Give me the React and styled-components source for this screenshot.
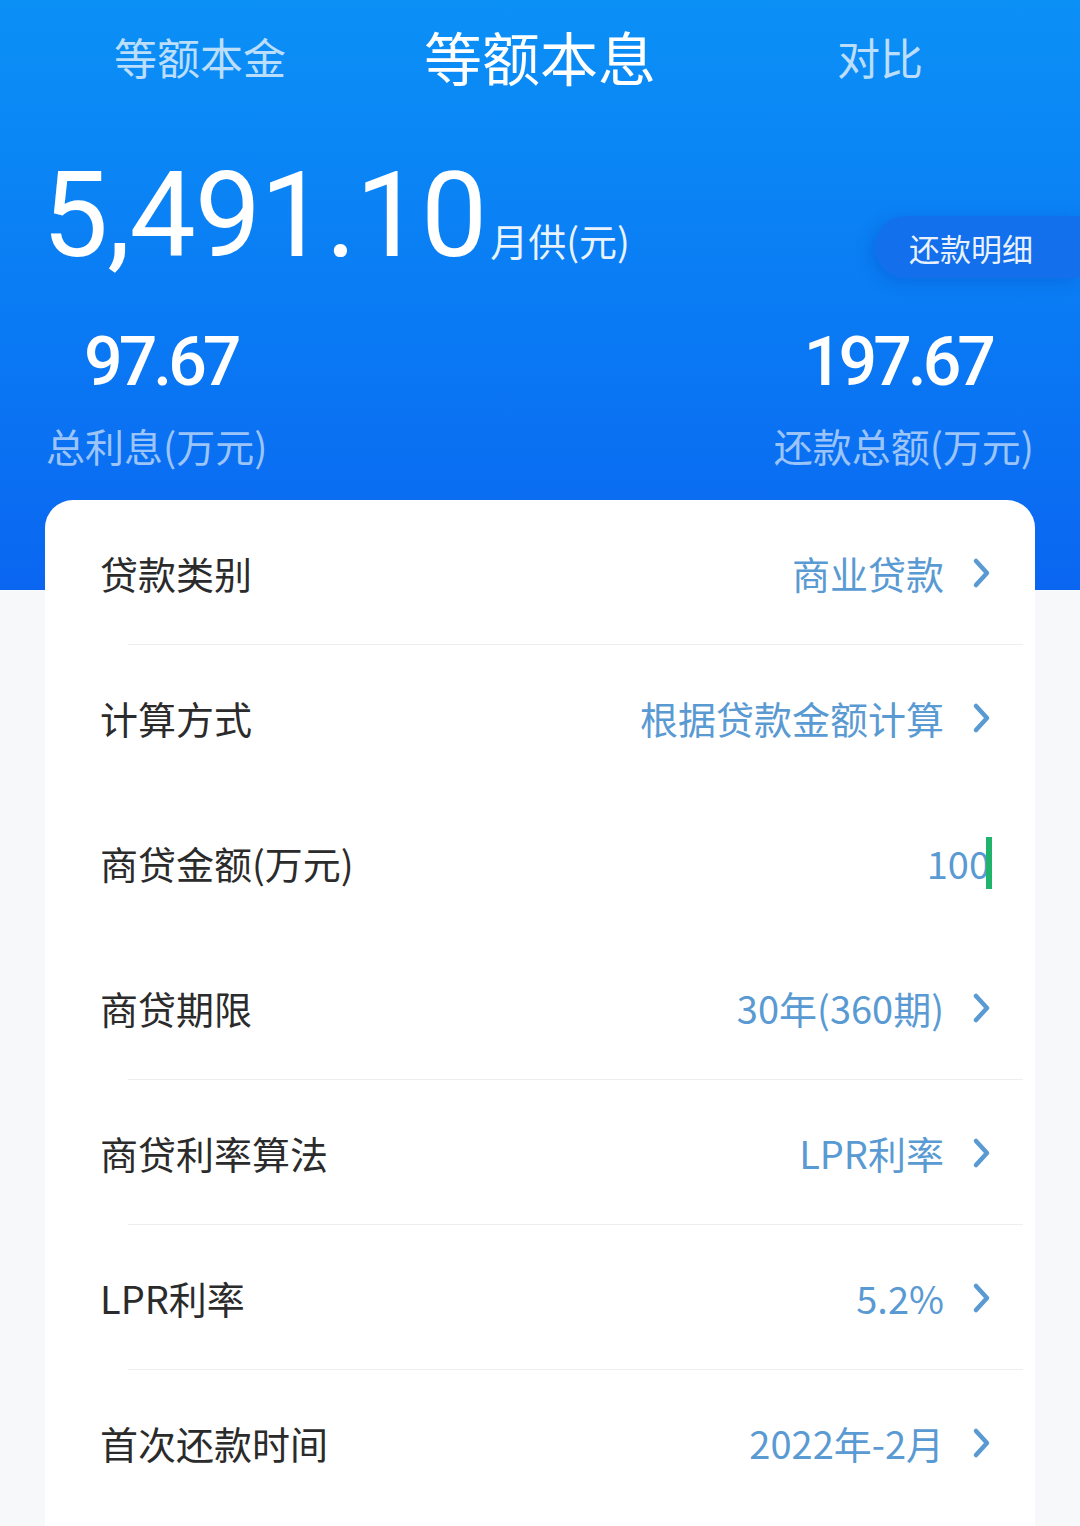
import React from "react";
import styled, { createGlobalStyle } from "styled-components";

const Global = createGlobalStyle`
  body {
    margin: 0;
    background: #f7f8fa;
    font-family: "Noto Sans CJK SC", "Noto Sans", sans-serif;
  }
`

const Page = styled.div`
  width: 1080px;
  min-height: 1526px;
  background: #f7f8fa;
  overflow: hidden;
`

const Header = styled.header`
  height: 590px;
  background: linear-gradient(180deg, #0b90f6 0%, #0a7cf4 50%, #0a66f1 100%);
  color: #fff;
`

const Tabs = styled.nav`
  display: flex;
  padding: 18px 0 0 30px;
  height: 100px;
`

const Tab = styled.div`
  width: 340px;
  text-align: center;
  font-size: ${(p) => (p.active ? '58px' : '43px')};
  line-height: 76px;
  color: ${(p) => (p.active ? '#fff' : 'rgba(255,255,255,0.72)')};
`

const AmountRow = styled.div`
  display: flex;
  align-items: flex-end;
  justify-content: space-between;
  padding: 38px 0 0 42px;
`

const Amount = styled.div`
  display: flex;
  align-items: baseline;
`

const Big = styled.span`
  font-family: Roboto, "Liberation Sans", sans-serif;
  font-size: 118px;
  line-height: 120px;
  letter-spacing: -1px;
`

const Unit = styled.span`
  font-size: 38px;
  margin-left: 4px;
  color: rgba(255,255,255,0.92);
`

const DetailButton = styled.div`
  width: 205px;
  height: 62px;
  margin-bottom: -2px;
  border-radius: 31px 0 0 31px;
  background: rgba(20, 110, 235, 0.9);
  box-shadow: -4px 4px 16px rgba(0, 60, 170, 0.25);
  display: flex;
  align-items: center;
  padding-left: 34px;
  box-sizing: border-box;
  font-size: 31px;
  color: rgba(255,255,255,0.92);
`

const Stats = styled.div`
  display: flex;
  justify-content: space-between;
  padding: 46px 46px 0 46px;
`

const Stat = styled.div`
  display: flex;
  flex-direction: column;
  align-items: ${(p) => (p.right ? 'flex-end' : 'flex-start')};
`

const StatValue = styled.span`
  font-family: Roboto, "Liberation Sans", sans-serif;
  font-weight: 500;
  font-size: 68px;
  line-height: 80px;
  letter-spacing: -4px;
  padding: ${(p) => (p.right ? '0 42px 0 0' : '0 0 0 38px')};
`

const StatLabel = styled.span`
  margin-top: 18px;
  font-size: 39px;
  line-height: 50px;
  color: rgba(255,255,255,0.6);
`

const Card = styled.section`
  margin: -90px 45px 0 45px;
  background: #fff;
  border-radius: 28px 28px 0 0;
  min-height: 1040px;
`

const Row = styled.div`
  height: 145px;
  display: flex;
  align-items: center;
  justify-content: space-between;
  padding: 0 43px 0 55px;
  position: relative;
  &::after {
    content: "";
    display: ${(p) => (p.divider ? 'block' : 'none')};
    position: absolute;
    left: 83px;
    right: 12px;
    bottom: 0;
    height: 1px;
    background: #eceef0;
  }
`

const Label = styled.span`
  font-size: 38px;
  color: #2b2b2b;
`

const Value = styled.span`
  display: flex;
  align-items: center;
  font-size: 38px;
  color: #5a9ad3;
`

const Chevron = styled.svg`
  width: 22px;
  height: 32px;
  margin-left: 26px;
`

const Cursor = styled.span`
  display: inline-block;
  width: 6px;
  height: 52px;
  margin-left: -4px;
  background: #1fb36c;
`

const rows = [
  { label: '贷款类别', value: '商业贷款', divider: true },
  { label: '计算方式', value: '根据贷款金额计算' },
  { label: '商贷金额(万元)', value: '100', input: true },
  { label: '商贷期限', value: '30年(360期)', divider: true },
  { label: '商贷利率算法', value: 'LPR利率', divider: true },
  { label: 'LPR利率', value: '5.2%', divider: true },
  { label: '首次还款时间', value: '2022年-2月' },
]

function Arrow() {
  return (
    <Chevron viewBox="0 0 22 32">
      <path d="M6 4 L17 16 L6 28" fill="none" stroke="#5a9ad3" strokeWidth="4.5" strokeLinecap="round" strokeLinejoin="round" />
    </Chevron>
  )
}

export default function App() {
  return (
    <Page>
      <Global />
      <Header>
        <Tabs>
          <Tab>等额本金</Tab>
          <Tab active>等额本息</Tab>
          <Tab>对比</Tab>
        </Tabs>
        <AmountRow>
          <Amount>
            <Big>5,491.10</Big>
            <Unit>月供(元)</Unit>
          </Amount>
          <DetailButton>还款明细</DetailButton>
        </AmountRow>
        <Stats>
          <Stat>
            <StatValue>97.67</StatValue>
            <StatLabel>总利息(万元)</StatLabel>
          </Stat>
          <Stat right>
            <StatValue right>197.67</StatValue>
            <StatLabel>还款总额(万元)</StatLabel>
          </Stat>
        </Stats>
      </Header>
      <Card>
        {rows.map((r) => (
          <Row key={r.label} divider={r.divider}>
            <Label>{r.label}</Label>
            {r.input ? (
              <Value>
                {r.value}
                <Cursor />
              </Value>
            ) : (
              <Value>
                {r.value}
                <Arrow />
              </Value>
            )}
          </Row>
        ))}
      </Card>
    </Page>
  )
}
